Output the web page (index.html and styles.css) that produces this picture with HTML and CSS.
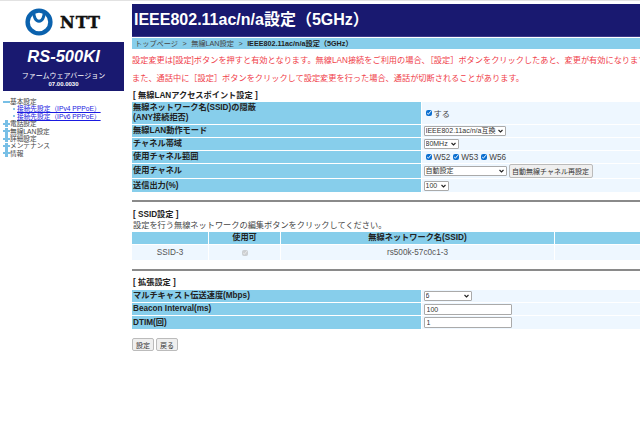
FILE: index.html
```html
<!DOCTYPE html>
<html lang="ja">
<head>
<meta charset="utf-8">
<title>IEEE802.11ac/n/a設定(5GHz)</title>
<link rel="stylesheet" href="styles.css">
</head>
<body>
<div class="page">
  <aside class="side">
    <div class="logo">
      <svg class="logo-mark" width="28" height="28" viewBox="0 0 28 28"><circle cx="14" cy="14" r="11.4" fill="none" stroke="#0b62ae" stroke-width="4.4"/><path d="M8.8 3 C8.6 9.5 10.8 13.2 14 13.2 C17.2 13.2 19.4 9.5 19.2 3" fill="none" stroke="#0b62ae" stroke-width="3"/></svg>
      <span class="logo-text">NTT</span>
    </div>
    <div class="model">
      <div class="model-name">RS-500KI</div>
      <div class="fw">ファームウェアバージョン</div>
      <div class="fw-no">07.00.0030</div>
    </div>
    <ul class="tree">
      <li><span class="minus"></span>基本設定</li>
      <li class="sub"><a href="#">接続先設定（IPv4 PPPoE）</a></li>
      <li class="sub"><a href="#">接続先設定（IPv6 PPPoE）</a></li>
      <li><span class="plus"></span>電話設定</li>
      <li><span class="plus"></span>無線LAN設定</li>
      <li><span class="plus"></span>詳細設定</li>
      <li><span class="plus"></span>メンテナンス</li>
      <li><span class="plus"></span>情報</li>
    </ul>
  </aside>
  <main class="main">
    <h1 class="title">IEEE802.11ac/n/a設定（5GHz）</h1>
    <div class="crumb">トップページ<span class="gt">&gt;</span>無線LAN設定<span class="gt">&gt;</span><b>IEEE802.11ac/n/a設定（5GHz）</b></div>
    <p class="note">設定変更は[設定]ボタンを押すと有効となります。無線LAN接続をご利用の場合、［設定］ボタンをクリックしたあと、変更が有効になります。</p>
    <p class="note">また、通話中に［設定］ボタンをクリックして設定変更を行った場合、通話が切断されることがあります。</p>
    <h2 class="sec first">[ 無線LANアクセスポイント設定 ]</h2>
    <div class="form">
      <div class="l h22">無線ネットワーク名(SSID)の隠蔽<br>(ANY接続拒否)</div>
      <div class="v"><label class="chk"><input type="checkbox" checked>する</label></div>
      <div class="l h12">無線LAN動作モード</div>
      <div class="v"><select class="s-mode"><option>IEEE802.11ac/n/a互換</option></select></div>
      <div class="l h12">チャネル帯域</div>
      <div class="v"><select class="s-bw"><option>80MHz</option></select></div>
      <div class="l h12">使用チャネル範囲</div>
      <div class="v"><label class="chk"><input type="checkbox" checked>W52</label><label class="chk"><input type="checkbox" checked>W53</label><label class="chk"><input type="checkbox" checked>W56</label></div>
      <div class="l h14">使用チャネル</div>
      <div class="v"><select class="s-ch"><option>自動設定</option></select><button class="btn auto" type="button">自動無線チャネル再設定</button></div>
      <div class="l h13">送信出力(%)</div>
      <div class="v"><select class="s-pw"><option>100</option></select></div>
    </div>
    <hr class="rule r1">
    <h2 class="sec s2">[ SSID設定 ]</h2>
    <p class="hint">設定を行う無線ネットワークの編集ボタンをクリックしてください。</p>
    <div class="ssid">
      <div class="th"></div><div class="th">使用可</div><div class="th">無線ネットワーク名(SSID)</div><div class="th"></div>
      <div class="td">SSID-3</div><div class="td"><input type="checkbox" checked disabled></div><div class="td">rs500k-57c0c1-3</div><div class="td"></div>
    </div>
    <hr class="rule r2">
    <h2 class="sec s3">[ 拡張設定 ]</h2>
    <div class="form">
      <div class="l h12">マルチキャスト伝送速度(Mbps)</div>
      <div class="v"><select class="s-mc"><option>6</option></select></div>
      <div class="l h12">Beacon Interval(ms)</div>
      <div class="v"><input class="txt" type="text" value="100"></div>
      <div class="l h13">DTIM(回)</div>
      <div class="v"><input class="txt" type="text" value="1"></div>
    </div>
    <div class="actions"><button class="btn act" type="button">設定</button><button class="btn act" type="button">戻る</button></div>
  </main>
</div>
</body>
</html>
```
FILE: styles.css
```css
* { box-sizing: border-box; }
html, body { margin: 0; padding: 0; height: 427px; overflow: hidden; background: #fff; }
body { font-family: "Liberation Sans", "Noto Sans CJK JP", sans-serif; font-size: 8.2px; color: #333; border-top: 1px solid #e2e2e2; }
.page { display: flex; width: 640px; }
.side { width: 132px; flex: none; padding-top: 7px; }
.logo { display: flex; align-items: center; height: 28px; padding-left: 25px; gap: 7px; margin-bottom: 6px; }
.logo-mark { flex: none; }
.logo-text { font: bold 16px "DejaVu Serif", serif; color: #111; letter-spacing: 1px; -webkit-text-stroke: 0.4px #111; }
.model { width: 121px; height: 49px; margin-left: 3px; background: #191970; color: #fff; text-align: center; padding-top: 5px; }
.model-name { font: italic bold 16.5px/19px "Liberation Sans", sans-serif; }
.fw { font-size: 7px; line-height: 9px; margin-top: 5px; }
.fw-no { font-size: 6px; line-height: 8px; font-weight: bold; }
.tree { list-style: none; margin: 7px 0 0 3px; padding: 0; font-size: 6.7px; line-height: 7.4px; color: #444; }
.tree li { display: flex; align-items: center; white-space: nowrap; height: 7.4px; }
.tree .sub { padding-left: 10px; }
.tree .sub::before { content: ""; width: 2px; height: 2px; background: #8cc6e8; margin-right: 2px; }
.tree a { color: #1a1ae0; }
.minus { width: 7px; height: 2px; background: #78bfe6; }
.plus { width: 7px; height: 7px; background: linear-gradient(#78bfe6, #78bfe6) center/7px 2px no-repeat, linear-gradient(#78bfe6, #78bfe6) center/3px 7px no-repeat; }
.main { width: 508px; flex: none; overflow: hidden; }
.title { margin: 3px 0 0; height: 33px; background: #191970; color: #fff; font-size: 16px; line-height: 32px; font-weight: bold; padding-left: 2px; white-space: nowrap; border-bottom: 1px solid #3a3a8a; }
.crumb { height: 11px; margin-top: 1px; background: #87ceeb; font-size: 7.2px; line-height: 11px; padding-left: 3px; color: #444; white-space: nowrap; }
.crumb b { color: #222; }
.gt { margin: 0 4.5px; }
.note { margin: 0; height: 18px; line-height: 18px; font-size: 8.2px; color: #f0404a; white-space: nowrap; }
.crumb + .note { margin-top: 3px; }
.sec { margin: 0; font-size: 8.2px; line-height: 10px; font-weight: bold; color: #222; padding-left: 1px; }
.sec.first { margin-top: 3px; margin-bottom: 1px; }
.sec.s2 { margin-top: 8px; margin-bottom: 1px; }
.sec.s3 { margin-top: 7px; margin-bottom: 2px; }
.form { display: grid; grid-template-columns: 289px 1fr; gap: 1px; }
.l { background: #87ceeb; font-weight: bold; color: #222; line-height: 10px; padding-left: 1px; display: flex; align-items: center; }
.l.h22 { height: 22px; display: block; padding-top: 1px; }
.l.h12 { height: 12px; }
.l.h13 { height: 13px; }
.l.h14 { height: 14px; }
.v { background: #eef7ff; display: flex; align-items: center; padding-left: 1.5px; color: #444; min-height: 0; }
.chk { display: inline-flex; align-items: center; margin-right: 1px; }
input[type="checkbox"] { width: 6px; height: 6px; margin: 0 2px 0 2px; accent-color: #0b6fd0; }
select, .txt, .btn { font-family: inherit; font-size: 7px; color: #333; padding: 0; }
select { appearance: none; height: 10px; line-height: 8px; padding-left: 1px; background: #fff url("data:image/svg+xml,%3Csvg xmlns='http://www.w3.org/2000/svg' width='5' height='4'%3E%3Cpath d='M.5 1l2 2 2-2' fill='none' stroke='%23222' stroke-width='1.1'/%3E%3C/svg%3E") no-repeat right 1.5px center; border: 1px solid #aaa; border-radius: 1px; }
.s-mode { width: 82px; }
.s-bw { width: 35px; }
.s-ch { width: 83px; }
.s-pw { width: 25px; }
.s-mc { width: 48px; }
.txt { width: 88px; height: 11px; border: 1px solid #aaa; border-radius: 1px; padding-left: 2px; background: #fff; }
.btn { background: #efefef; border: 1px solid #bbb; border-radius: 2px; }
.auto { height: 14px; width: 84px; margin-left: 2px; white-space: nowrap; overflow: hidden; }
.rule { margin: 0; border: 0; height: 2px; background: #8a8a8a; }
.r1 { margin-top: 8px; }
.r2 { margin-top: 9px; }
.hint { margin: 0; line-height: 10px; font-size: 8.2px; color: #444; white-space: nowrap; padding-left: 1px; }
.ssid { display: grid; grid-template-columns: 76px 71px 273px 1fr; gap: 1px; margin-top: 1px; }
.th { height: 12px; background: #87ceeb; font-weight: bold; color: #222; text-align: center; line-height: 12px; }
.td { height: 15px; background: #eef7ff; text-align: center; line-height: 15px; color: #555; display: flex; align-items: center; justify-content: center; }
.td input { accent-color: #ccc; }
.actions { display: flex; gap: 2px; margin-top: 9px; }
.act { width: 22px; height: 13px; }
```
